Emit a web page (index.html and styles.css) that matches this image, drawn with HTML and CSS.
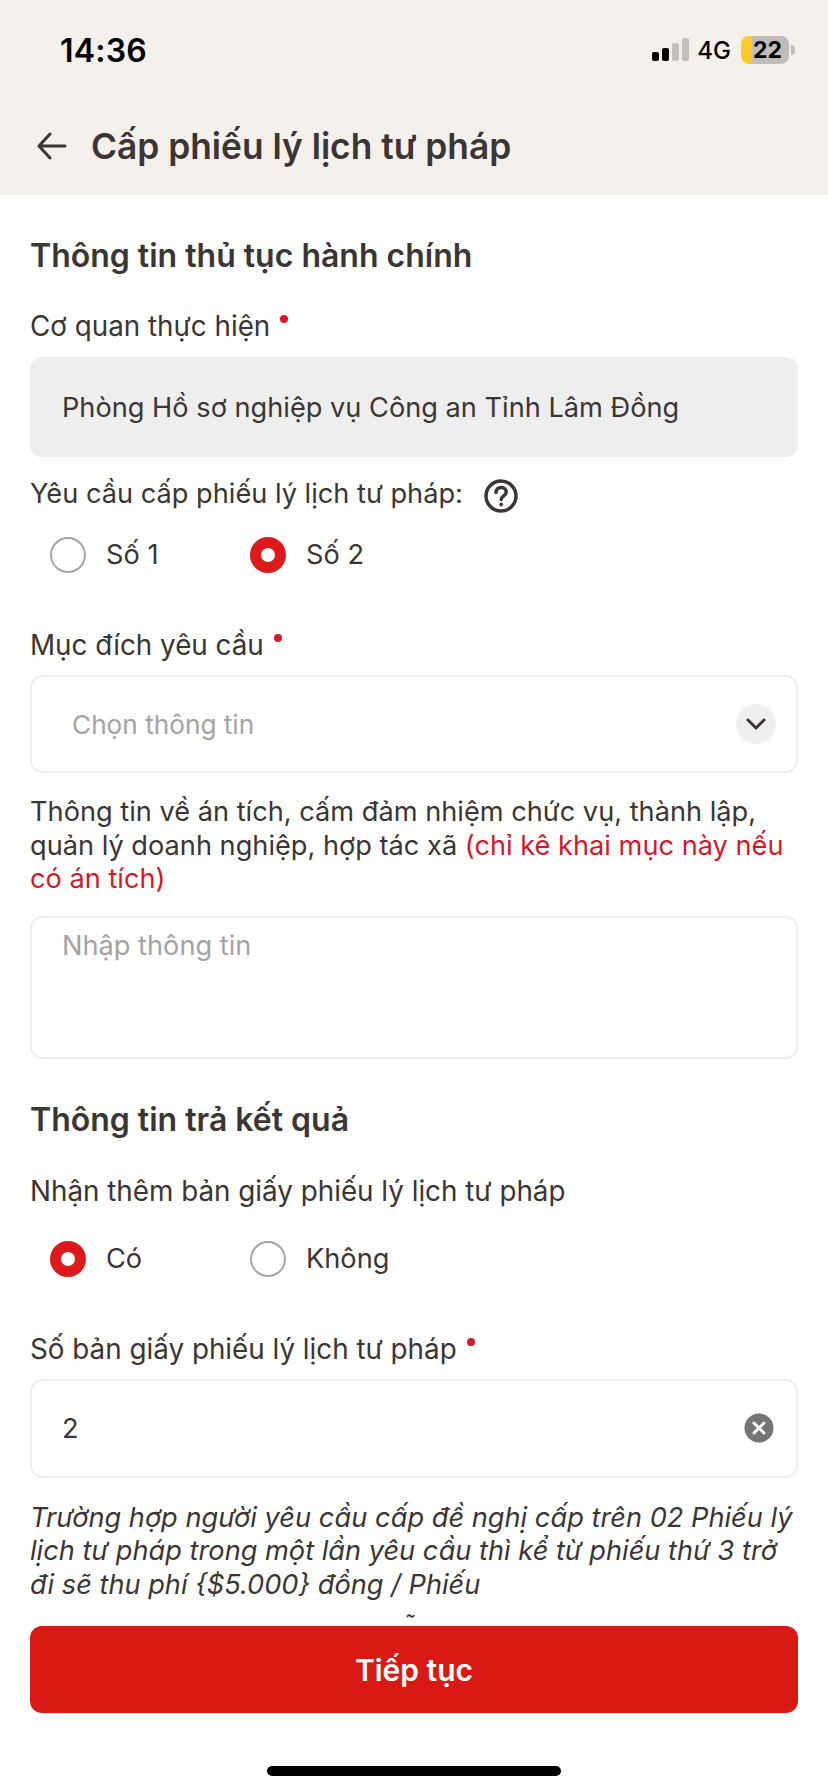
FILE: index.html
```html
<!DOCTYPE html>
<html lang="vi">
<head>
<meta charset="utf-8">
<title>Cấp phiếu lý lịch tư pháp</title>
<link rel="stylesheet" href="styles.css">
</head>
<body>
<div class="app">
  <header class="top">
    <div class="status">
      <span class="time">14:36</span>
      <div class="status-right">
        <svg class="signal" width="37" height="24" viewBox="0 0 37 24"><rect x="0" y="14" width="7" height="9" rx="2" fill="#000"/><rect x="10" y="10" width="7" height="13" rx="2" fill="#000"/><rect x="20" y="5" width="7" height="18" rx="2" fill="#c3bfbb"/><rect x="30" y="0" width="7" height="23" rx="2" fill="#c3bfbb"/></svg>
        <span class="net">4G</span>
        <div class="battery"><span class="battery-level">22</span></div>
        <span class="nub"></span>
      </div>
    </div>
    <div class="nav">
      <svg class="back" width="30" height="28" viewBox="0 0 30 28" fill="none" stroke="#3b3533" stroke-width="3" stroke-linecap="round" stroke-linejoin="round"><path d="M28 14H2M13 2 2 14l11 12"/></svg>
      <h1 class="title">Cấp phiếu lý lịch tư pháp</h1>
    </div>
  </header>

  <main class="scroll">
    <h2 class="section first">Thông tin thủ tục hành chính</h2>
    <div class="label wide l-agency">Cơ quan thực hiện<span class="req"></span></div>
    <div class="box filled">Phòng Hồ sơ nghiệp vụ Công an Tỉnh Lâm Đồng</div>

    <div class="label l-request">Yêu cầu cấp phiếu lý lịch tư pháp:
      <svg class="help" width="34" height="34" viewBox="0 0 34 34" fill="none" stroke="#3b3533"><circle cx="17" cy="17" r="15" stroke-width="3.500"/><path d="M12 13.500c0-3 2.300-5 5.200-5 3 0 5 2 5 4.500 0 3.800-5 3.900-5 7.500" stroke-width="3.500" stroke-linecap="round"/><circle cx="17.200" cy="25.500" r="1.500" fill="#3b3533" stroke-width="1"/></svg>
    </div>
    <div class="radios r-one">
      <div class="radio"><span class="dot"></span>Số 1</div>
      <div class="radio"><span class="dot on"></span>Số 2</div>
    </div>

    <div class="label wide l-purpose">Mục đích yêu cầu<span class="req"></span></div>
    <div class="box select">
      <span class="ph narrow">Chọn thông tin</span>
      <span class="chev"><svg width="20" height="12" viewBox="0 0 20 12" fill="none" stroke="#3b3533" stroke-width="3" stroke-linecap="round" stroke-linejoin="round"><path d="M2 2l8 8 8-8"/></svg></span>
    </div>

    <p class="note">Thông tin về án tích, cấm đảm nhiệm chức vụ, thành lập, quản lý doanh nghiệp, hợp tác xã <span class="red">(chỉ kê khai mục này nếu có án tích)</span></p>
    <div class="box area"><span class="ph">Nhập thông tin</span></div>

    <h2 class="section second">Thông tin trả kết quả</h2>
    <div class="label wide l-paper">Nhận thêm bản giấy phiếu lý lịch tư pháp</div>
    <div class="radios r-two">
      <div class="radio"><span class="dot on"></span>Có</div>
      <div class="radio"><span class="dot"></span>Không</div>
    </div>

    <div class="label wide l-count">Số bản giấy phiếu lý lịch tư pháp<span class="req"></span></div>
    <div class="box input">
      <span>2</span>
      <svg class="clear" width="30" height="30" viewBox="0 0 30 30"><circle cx="15" cy="15" r="14.500" fill="#757575"/><path d="M10 10l10 10M20 10 10 20" stroke="#fff" stroke-width="3" stroke-linecap="round"/></svg>
    </div>
    <p class="hint">Trường hợp người yêu cầu cấp đề nghị cấp trên 02 Phiếu lý lịch tư pháp trong một lần yêu cầu thì kể từ phiếu thứ 3 trở đi sẽ thu phí {$5.000} đồng / Phiếu</p>
    <p class="hint next">Trường hợp đặc biệt được miễn, giảm theo mức phí</p>
  </main>

  <footer class="bottom">
    <button class="cta">Tiếp tục</button>
    <div class="home"></div>
  </footer>
</div>
</body>
</html>
```
FILE: styles.css
```css
* { box-sizing: border-box; }
html, body { margin: 0; padding: 0; }
body { font-family: Inter, "Noto Sans", sans-serif; color: #3b3533; background: #fff; }
.app { width: 828px; height: 1792px; display: flex; flex-direction: column; overflow: hidden; }

.top { background: #f5f0ec; height: 195px; flex: none; }
.status { display: flex; justify-content: space-between; align-items: center; height: 100px; padding: 0 33px 0 60px; }
.time { font-size: 32px; font-weight: 600; color: #000; letter-spacing: 0.2px; }
.status-right { display: flex; align-items: center; height: 30px; }
.signal { margin-right: 8px; }
.net { font-size: 24px; font-weight: 500; color: #000; margin-right: 10px; }
.battery { width: 48px; height: 28px; border-radius: 8px; background: linear-gradient(90deg, #fbcb2c 0 11px, #bfbcb9 11px); display: flex; align-items: center; justify-content: center; }
.battery-level { font-size: 23px; font-weight: 700; color: #000; margin-left: 5px; }
.nub { width: 4px; height: 10px; background: #bfbcb9; border-radius: 0 4px 4px 0; margin-left: 2px; }
.nav { display: flex; align-items: center; height: 95px; padding-left: 37px; }
.back { margin-right: 24px; margin-top: -3px; }
.title { margin: -2px 0 0; font-size: 35.300px; font-weight: 600; line-height: 40px; color: #3b3533; }

.scroll { flex: none; height: 1423px; overflow: hidden; padding: 0 30px; }
.section { margin: 0; font-size: 32px; font-weight: 600; line-height: 36px; color: #3b3533; }
.section.first { padding-top: 43px; }
.section.second { margin-top: 43px; }

.label { font-size: 27.200px; line-height: 34px; display: flex; align-items: center; }
.label.wide { font-size: 27.800px; }
.req { width: 8px; height: 8px; border-radius: 50%; background: #d9182a; margin: -14px 0 0 10px; }
.l-agency { margin-top: 35px; }
.l-request { margin-top: 18px; }
.help { margin-left: 21px; margin-top: 4px; }
.l-purpose { margin-top: 55px; }
.l-paper { margin-top: 36px; }
.l-count { margin-top: 55px; }

.box { width: 768px; border-radius: 12px; font-size: 27.200px; border: 2px solid #efefef; background: #fff; }
.filled { height: 100px; background: #eeeeee; border: 0; margin-top: 14px; padding: 0 32px; display: flex; align-items: center; }
.select { height: 98px; margin-top: 13px; display: flex; align-items: center; justify-content: space-between; padding: 0 20px 0 40px; }
.ph { color: #a3a3a3; }
.ph.narrow { font-size: 26.200px; }
.chev { width: 40px; height: 40px; border-radius: 50%; background: #efefef; display: flex; align-items: center; justify-content: center; }
.area { height: 143px; margin-top: 20px; padding: 11px 30px; line-height: 34px; }
.input { height: 99px; margin-top: 13px; display: flex; align-items: center; justify-content: space-between; padding: 0 22px 0 30px; }

.radios { display: flex; padding-left: 20px; }
.r-one { margin-top: 24px; }
.r-two { margin-top: 33px; }
.radio { width: 200px; display: flex; align-items: center; font-size: 27.200px; line-height: 36px; }
.dot { width: 36px; height: 36px; border-radius: 50%; border: 2px solid #a6a6a6; margin-right: 20px; flex: none; }
.dot.on { border: 11px solid #dc1a1c; background: #fff; }

.note { margin: 22px 0 0; font-size: 27.200px; line-height: 33.500px; width: 768px; }
.red { color: #d4182c; }
.hint { margin: 23px 0 0; font-size: 27.200px; line-height: 33.500px; font-style: italic; width: 768px; }
.hint.next { margin-top: 12px; white-space: nowrap; }

.bottom { flex: 1; background: #fff; padding: 8px 30px 0; }
.cta { display: block; width: 768px; height: 87px; border: 0; border-radius: 12px; background: #d91a14; color: #fff; font: 600 30px Inter, sans-serif; }
.home { width: 294px; height: 10px; border-radius: 5px; background: #000; margin: 53px auto 0; }
```
